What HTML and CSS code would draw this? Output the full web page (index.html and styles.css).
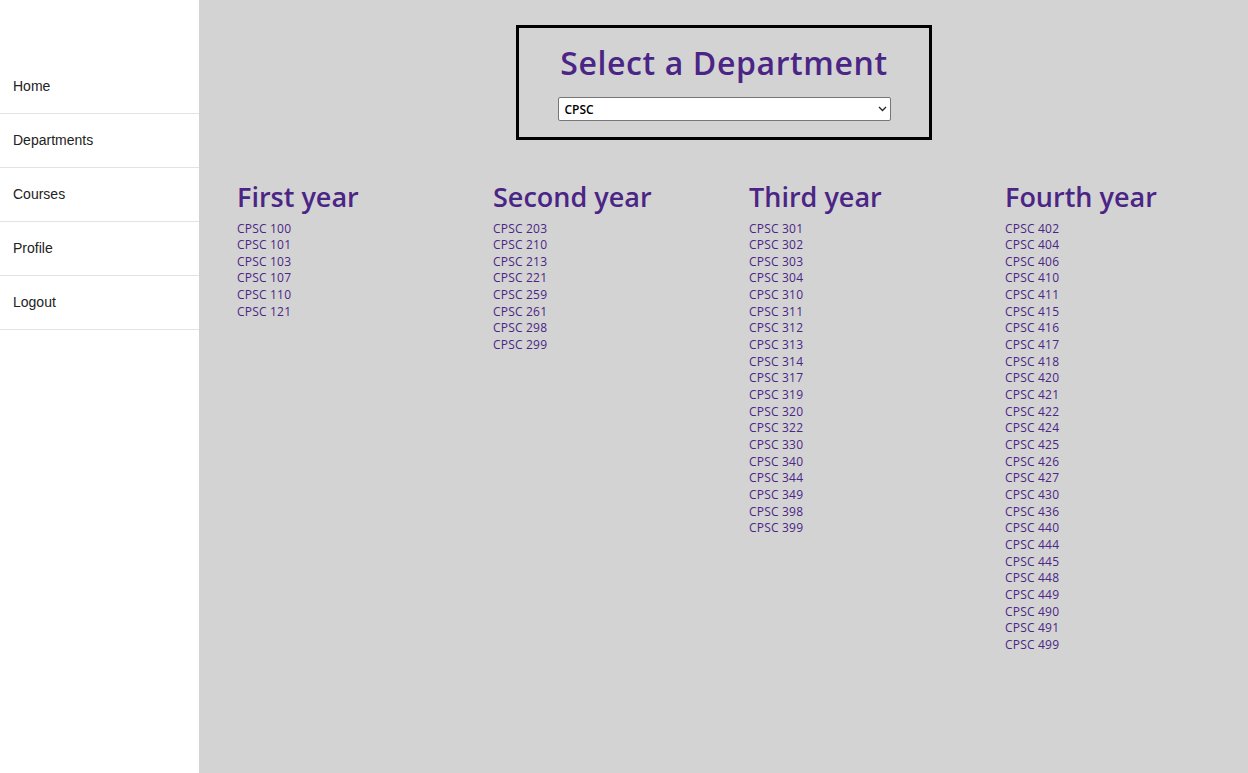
FILE: index.html
```html
<!DOCTYPE html>
<html>
<head>
<meta charset="utf-8">
<link rel="stylesheet" href="styles.css">
</head>
<body>
<div class="app">
  <nav class="sidebar">
    <a class="nav-item" href="#">Home</a>
    <a class="nav-item" href="#">Departments</a>
    <a class="nav-item" href="#">Courses</a>
    <a class="nav-item" href="#">Profile</a>
    <a class="nav-item" href="#">Logout</a>
  </nav>
  <main class="main">
    <div class="dept-box">
      <h1 class="dept-title">Select a Department</h1>
      <div class="select-wrap">
        <select class="dept-select"><option>CPSC</option></select>
        <svg class="chevron" width="9" height="6" viewBox="0 0 9 6"><path d="M1 1l3.5 3.5L8 1" fill="none" stroke="#222" stroke-width="1.3"/></svg>
      </div>
    </div>
    <div class="years">
      <section class="year">
        <h2 class="year-title">First year</h2>
        <a href="#">CPSC 100</a><a href="#">CPSC 101</a><a href="#">CPSC 103</a><a href="#">CPSC 107</a><a href="#">CPSC 110</a><a href="#">CPSC 121</a>
      </section>
      <section class="year">
        <h2 class="year-title">Second year</h2>
        <a href="#">CPSC 203</a><a href="#">CPSC 210</a><a href="#">CPSC 213</a><a href="#">CPSC 221</a><a href="#">CPSC 259</a><a href="#">CPSC 261</a><a href="#">CPSC 298</a><a href="#">CPSC 299</a>
      </section>
      <section class="year">
        <h2 class="year-title">Third year</h2>
        <a href="#">CPSC 301</a><a href="#">CPSC 302</a><a href="#">CPSC 303</a><a href="#">CPSC 304</a><a href="#">CPSC 310</a><a href="#">CPSC 311</a><a href="#">CPSC 312</a><a href="#">CPSC 313</a><a href="#">CPSC 314</a><a href="#">CPSC 317</a><a href="#">CPSC 319</a><a href="#">CPSC 320</a><a href="#">CPSC 322</a><a href="#">CPSC 330</a><a href="#">CPSC 340</a><a href="#">CPSC 344</a><a href="#">CPSC 349</a><a href="#">CPSC 398</a><a href="#">CPSC 399</a>
      </section>
      <section class="year">
        <h2 class="year-title">Fourth year</h2>
        <a href="#">CPSC 402</a><a href="#">CPSC 404</a><a href="#">CPSC 406</a><a href="#">CPSC 410</a><a href="#">CPSC 411</a><a href="#">CPSC 415</a><a href="#">CPSC 416</a><a href="#">CPSC 417</a><a href="#">CPSC 418</a><a href="#">CPSC 420</a><a href="#">CPSC 421</a><a href="#">CPSC 422</a><a href="#">CPSC 424</a><a href="#">CPSC 425</a><a href="#">CPSC 426</a><a href="#">CPSC 427</a><a href="#">CPSC 430</a><a href="#">CPSC 436</a><a href="#">CPSC 440</a><a href="#">CPSC 444</a><a href="#">CPSC 445</a><a href="#">CPSC 448</a><a href="#">CPSC 449</a><a href="#">CPSC 490</a><a href="#">CPSC 491</a><a href="#">CPSC 499</a>
      </section>
    </div>
  </main>
</div>
</body>
</html>
```
FILE: styles.css
```css
* { box-sizing: border-box; }
html, body { margin: 0; padding: 0; height: 100%; }
body { font-family: "Liberation Sans", Arial, sans-serif; }
.app { display: flex; height: 773px; }
.sidebar {
  width: 199px;
  flex: none;
  background: #fff;
  padding-top: 60px;
  display: flex;
  flex-direction: column;
}
.nav-item {
  display: flex;
  align-items: center;
  height: 54px;
  padding-left: 13px;
  padding-bottom: 1px;
  border-bottom: 1px solid #e3e3e3;
  color: #222;
  font-size: 14px;
  text-decoration: none;
}
.main {
  flex: 1;
  background: #d3d3d3;
  padding-top: 25px;
  padding-left: 38px;
}
.dept-box {
  width: 416px;
  height: 115px;
  margin: 0 0 0 279px;
  border: 3px solid #000;
  display: flex;
  flex-direction: column;
  align-items: center;
  padding-top: 13px;
}
.dept-title {
  margin: 0;
  font-family: "Open Sans", sans-serif;
  font-weight: 600;
  font-size: 32px;
  line-height: 44px;
  color: #4b2586;
  letter-spacing: 0.6px;
}
.select-wrap { margin-top: 12px; position: relative; }
.dept-select {
  appearance: none;
  -webkit-appearance: none;
  display: block;
  width: 333px;
  height: 24px;
  font-family: "Open Sans", sans-serif;
  font-size: 12px;
  font-weight: 600;
  color: #000;
  background: #fff;
  border: 1px solid #767676;
  border-radius: 2px;
  padding: 0 6px;
}
.chevron { position: absolute; right: 4px; top: 9px; pointer-events: none; }
.years {
  display: grid;
  grid-template-columns: repeat(4, 256px);
  margin-top: 39px;
}
.year { display: flex; flex-direction: column; }
.year-title {
  margin: 0 0 5.5px 0;
  font-family: "Open Sans", sans-serif;
  font-weight: 600;
  font-size: 27px;
  line-height: 36px;
  color: #4b2586;
}
.year a {
  font-family: "Open Sans", sans-serif;
  font-weight: 500;
  font-size: 12px;
  line-height: 16.65px;
  letter-spacing: 0.2px;
  color: #4b2586;
  text-decoration: none;
}
```
